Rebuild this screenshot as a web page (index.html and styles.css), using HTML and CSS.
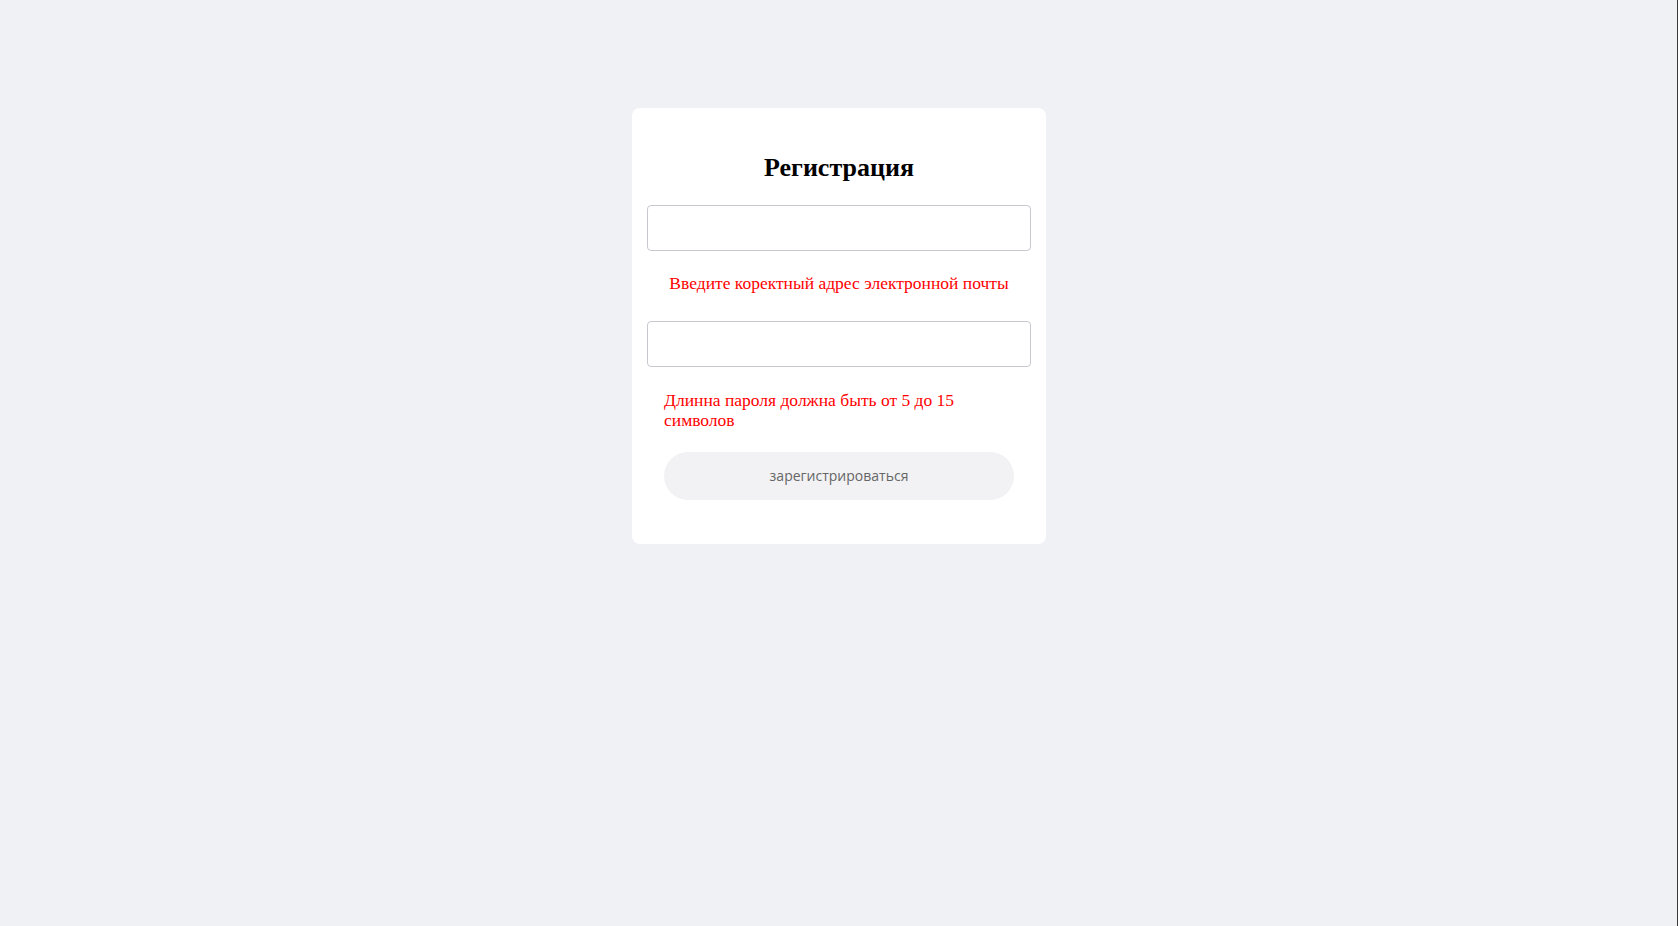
FILE: index.html
```html
<!DOCTYPE html>
<html lang="ru">
<head>
<meta charset="utf-8">
<title>Регистрация</title>
<link rel="stylesheet" href="styles.css">
</head>
<body>
<div class="page">
  <form class="card">
    <h2 class="title">Регистрация</h2>
    <input class="field" type="email">
    <p class="error error-center">Введите коректный адрес электронной почты</p>
    <input class="field field-second" type="password">
    <p class="error error-left">Длинна пароля должна быть от 5 до 15 символов</p>
    <button class="submit" type="button">зарегистрироваться</button>
  </form>
</div>
</body>
</html>
```
FILE: styles.css
```css
html {
  background: linear-gradient(to left, #3a3a3a 1px, #f0f1f5 1px);
  min-height: 100%;
}
body {
  margin: 0;
  font-family: "Liberation Serif", "Times New Roman", serif;
}
.page {
  display: flex;
  justify-content: center;
  padding-top: 108px;
}
.card {
  width: 414px;
  box-sizing: border-box;
  background: #ffffff;
  border-radius: 8px;
  padding: 45px 15px 44px;
  display: flex;
  flex-direction: column;
}
.title {
  margin: 0;
  font-size: 26px;
  line-height: 30px;
  font-weight: bold;
  text-align: center;
  color: #000;
}
.field {
  margin: 22px 0 0;
  height: 46px;
  box-sizing: border-box;
  border: 1px solid #c8c8d0;
  border-radius: 4px;
  background: #fff;
  padding: 0 10px;
  outline: none;
}
.field-second {
  margin-top: 27.5px;
}
.error {
  color: #ff0000;
  font-size: 17.5px;
  line-height: 20px;
  margin: 22.25px 17px 0;
}
.error-center {
  text-align: center;
}
.error-left {
  text-align: left;
  margin-top: 22.75px;
}
.submit {
  margin: 22px auto 0;
  width: 350px;
  height: 48px;
  border: none;
  border-radius: 24px;
  background: #f2f2f4;
  color: #666666;
  font-family: "Open Sans", "DejaVu Sans", sans-serif;
  font-size: 14px;
  cursor: pointer;
}
```
